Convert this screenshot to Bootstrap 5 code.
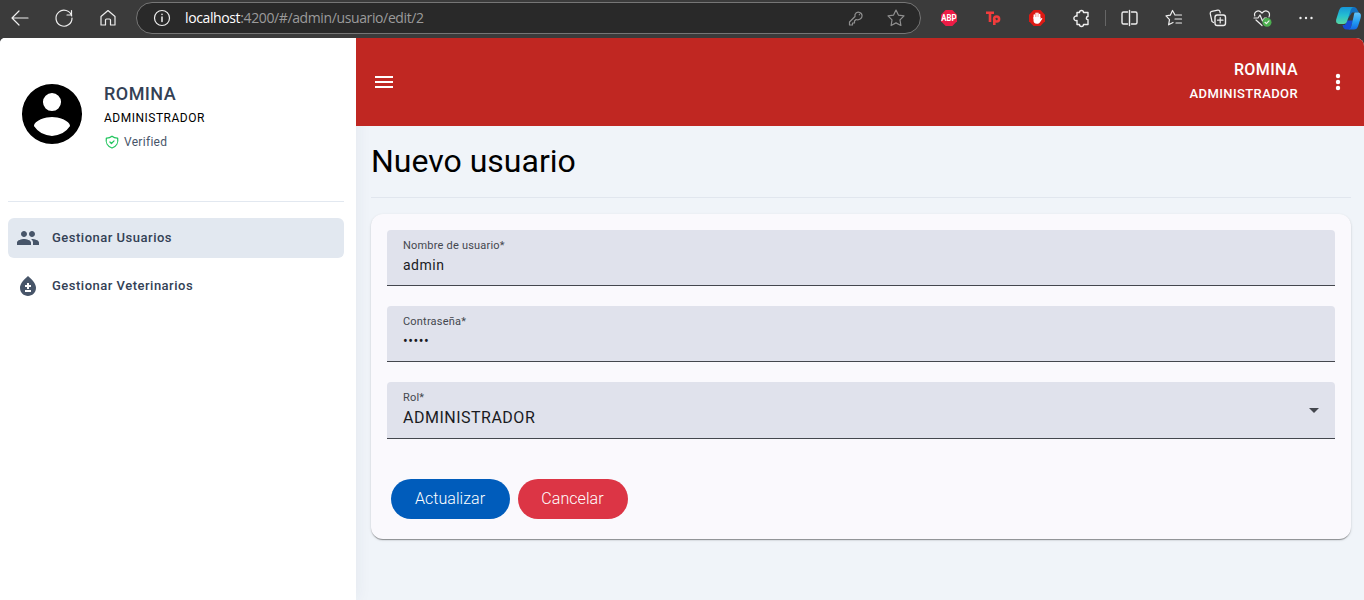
<!DOCTYPE html>
<html lang="es">
<head>
<meta charset="utf-8">
<meta name="viewport" content="width=device-width, initial-scale=1">
<title>Nuevo usuario</title>
<link rel="stylesheet" href="https://cdn.jsdelivr.net/npm/bootstrap@5.3.0/dist/css/bootstrap.min.css">
<style>
  body { font-family: Roboto, sans-serif; height: 600px; background: #3b3b3b; color: #000; }
  svg { display: block; flex: none; }
  .toolbar { height: 38px; padding-bottom: 2px; color: #eee; }
  .toolbar svg { fill: none; stroke: currentColor; stroke-width: 1.2; stroke-linecap: round; stroke-linejoin: round; }
  .slot { width: 44px; flex: none; display: flex; justify-content: center; }
  .slot-first { width: 40px; margin-right: 2px; }
  .address { width: 785px; height: 32px; margin: 0 6px; border: 1px solid #767676; background: #292929; padding: 0 12px 0 13px; font: 14px/20px "Open Sans", sans-serif; color: #9b9b9b; }
  .address b { font-weight: 400; color: #fff; }
  .url { margin-left: 11px; white-space: nowrap; letter-spacing: -.38px; }
  .dim { color: #8f8f8f; }
  .vline { width: 1px; height: 16px; margin: 0 2px; background: #666; }
  .app { height: 562px; border-radius: 5px 8px 0 0; background: #f0f4f9; }
  .side { width: 356px; flex: none; padding: 0 12px 0 8px; background: #fff; box-shadow: 0 0 16px rgba(40,60,90,.07); z-index: 1; }
  .profile { height: 164px; padding: 41px 0 0 9px; border-bottom: 1px solid #e2e8f0; }
  .who { margin: 3px 0 0 17px; }
  .who-name { font-size: 18px; line-height: 24px; font-weight: 500; letter-spacing: .45px; color: #334155; }
  .who-role { font-size: 12px; line-height: 24px; letter-spacing: .5px; }
  .who-ok { font-size: 12px; line-height: 24px; letter-spacing: .3px; color: #475569; gap: 5px; padding-left: 1px; }
  .menu-item { height: 40px; border-radius: 6px; padding: 0 8px; gap: 12px; font-size: 13px; font-weight: 500; letter-spacing: .5px; color: #334155; text-decoration: none; }
  .menu-item.active { background: #e2e8f0; }
  .menu-item svg { fill: #475569; }
  .topbar { height: 88px; background: #c02722; color: #fff; padding: 0 14px 0 16px; }
  .session { font-weight: 500; line-height: 24px; margin-right: 28px; }
  .session-name { font-size: 16px; letter-spacing: .4px; }
  .session-role { font-size: 13px; letter-spacing: .4px; }
  .main { padding: 0 13px 0 15px; }
  .title { font-size: 32px; line-height: 40px; font-weight: 400; padding: 15px 0 16px; height: 72px; margin: 0 0 16px; border-bottom: 1px solid #e1e6ee; }
  .panel { height: 325px; background: #faf9fd; border-radius: 12px; padding: 16px; box-shadow: 0 2px 1px -1px rgba(0,0,0,.25), 0 1px 1px rgba(0,0,0,.16), 0 1px 3px rgba(0,0,0,.12); }
  .field { height: 56px; margin-bottom: 20px; background: #e0e2ec; border-bottom: 1px solid #44474e; border-radius: 4px 4px 0 0; padding: 8px 16px 0; color: #1a1b1f; }
  .field-label { font-size: 11px; line-height: 16px; letter-spacing: .2px; color: #44474e; }
  .field-value { font-size: 14px; line-height: 22px; letter-spacing: .5px; }
  .field-choice { font-size: 16px; line-height: 24px; }
  .pill { height: 40px; border: 0; border-radius: 20px; padding: 0 1px 0 0; font-size: 16px; font-weight: 300; letter-spacing: .05px; color: #fff; }
  .pill-save { width: 119px; background: #005cbb; }
  .pill-cancel { width: 110px; background: #dc3545; }
</style>
</head>
<body class="overflow-hidden">
<header class="toolbar d-flex align-items-center">
  <div class="slot slot-first"><svg width="24" height="24" viewBox="0 0 24 24"><path d="M20 12H4.500M11 5l-7 7 7 7"/></svg></div>
  <div class="slot"><svg width="24" height="24" viewBox="0 0 24 24"><path d="M19.700 10A8 8 0 1 0 20 12M19.500 4.500V9H15"/></svg></div>
  <div class="slot"><svg width="24" height="24" viewBox="0 0 24 24"><path d="M5 10.500 12 4.500l7 6V19H14.500V14a1 1 0 0 0-1-1h-3a1 1 0 0 0-1 1v5H5z"/></svg></div>
  <div class="address rounded-pill d-flex align-items-center">
    <svg width="24" height="24" viewBox="0 0 24 24" style="color:#eee"><circle cx="12" cy="12" r="7.500"/><path d="M12 11v4.500M12 8.200v.2" stroke-width="1.500"/></svg>
    <span class="url"><b>localhost</b>:4200/#/admin/usuario/edit/2</span>
    <div class="dim d-flex ms-auto">
      <svg width="24" height="24" viewBox="0 0 24 24"><path d="M12 10.500 6.500 16v3h3v-2h2v-2l1.600-1.500c3 1 6-.8 6-3.700a3.700 3.700 0 0 0-7.100-1.300zM16.300 8.700h.2"/></svg>
      <svg width="24" height="24" viewBox="0 0 24 24" style="margin-left:17px"><path d="m12 4 2.400 5.100 5.600.8-4 4 .9 5.600L12 16.900l-4.900 2.600.9-5.600-4-4 5.600-.8z"/></svg>
    </div>
  </div>
  <div class="slot"><svg width="20" height="20" viewBox="0 0 20 20" style="stroke:none"><path fill="#ed1c46" d="M6.700 2h6.600L18 6.700v6.600L13.300 18H6.700L2 13.300V6.700z"/><text x="10" y="13.100" text-anchor="middle" font-family="Roboto" font-size="8.800" font-weight="700" textLength="15.400" lengthAdjust="spacingAndGlyphs" fill="#fff">ABP</text></svg></div>
  <div class="slot"><svg width="20" height="20" viewBox="0 0 20 20" style="stroke:#f23c3c;stroke-width:2.600;stroke-linecap:butt"><path d="M3 4.800h8M7 5v9M11.300 17V11"/><circle cx="13.600" cy="11" r="2.500"/></svg></div>
  <div class="slot"><svg width="20" height="20" viewBox="0 0 20 20" style="stroke:none"><path fill="#dc1a14" d="M6.700 2h6.600L18 6.700v6.600L13.300 18H6.700L2 13.300V6.700z"/><path fill="none" stroke="#fff" stroke-width="1.500" d="M7.300 10.500V7M9.100 10V5.300M10.900 10V5.300M12.600 10.500V6.500"/><path fill="#fff" d="M6.500 9h6.900v2.200l.9-1c.7-.4 1.200.1.900.7L13 14.300c-.7 1.200-1.800 1.500-3 1.500-2.600 0-3.500-1.300-3.500-3.500z"/></svg></div>
  <div class="slot"><svg width="24" height="24" viewBox="0 0 24 24"><path stroke-width="1.400" d="M8 6.500h2.500a2 2 0 0 1 4 0H19V10.500a1.600 1.600 0 0 0 0 3.300V18.500H14.500a2 2 0 0 1-4 0H8V14.500a2.300 2.300 0 1 1 0-4.300z"/></svg></div>
  <div class="vline"></div>
  <div class="slot"><svg width="24" height="24" viewBox="0 0 24 24" style="stroke-width:1.400"><path d="M9.500 6h-4A1.500 1.500 0 0 0 4 7.500v9A1.500 1.500 0 0 0 5.500 18h4M13.500 6h4A1.500 1.500 0 0 1 19 7.500v9a1.500 1.500 0 0 1-1.500 1.500h-4M11.500 4.500v15"/></svg></div>
  <div class="slot"><svg width="24" height="24" viewBox="0 0 24 24"><path d="m13 9-2.500-4.500-2.200 4.700-4.300.7 3.500 3.800-.9 5.100L11 16.500M14 9h5.500M13 13h6.500M14 17h5.500"/></svg></div>
  <div class="slot"><svg width="24" height="24" viewBox="0 0 24 24"><path d="M7.500 16.500 6 15.500 4.200 7.500a2 2 0 0 1 1.600-2.200l6-1.100A2 2 0 0 1 14 5.800l.2 1"/><rect x="9" y="9" width="10.500" height="10.500" rx="2.200" stroke-width="1.400"/><path d="M14.200 11.500v5.500M11.500 14.200H17"/></svg></div>
  <div class="slot"><svg width="24" height="24" viewBox="0 0 24 24"><path d="M4.800 10C3.500 6 8 2.800 12 7c4-4.200 9-1 7 4M4 12h4l2-3 2.500 6 2-3h2M6 14l6 5.500"/><circle cx="17" cy="16.200" r="4.500" fill="#4caf50" stroke="none"/><path d="m15 16.300 1.400 1.300 2.600-2.700"/></svg></div>
  <div class="slot"><svg width="24" height="24" viewBox="0 0 24 24" style="fill:currentColor;stroke:none"><circle cx="6.500" cy="12" r="1.200"/><circle cx="12" cy="12" r="1.200"/><circle cx="17.500" cy="12" r="1.200"/></svg></div>
  <svg width="32" height="28" viewBox="-2 0 32 28" style="stroke:none;margin-left:3px">
    <defs>
      <linearGradient id="ga" x1="0" y1="0" x2="0" y2="1"><stop stop-color="#1695d8"/><stop offset=".5" stop-color="#25bfd0"/><stop offset="1" stop-color="#58d6a0"/></linearGradient>
      <linearGradient id="gb" x1="0" y1="0" x2="0" y2="1"><stop stop-color="#63c4fb"/><stop offset=".55" stop-color="#229df2"/><stop offset="1" stop-color="#1368e6"/></linearGradient>
    </defs>
    <path fill="#174cd4" d="M14 16.500h6l-3 9h-3c-3 0-4-2-4.500-4.500H12z"/>
    <path fill="#116fc0" d="M17 3h4c3 0 3.500 4 5 5.500h-7l-4 6z"/>
    <path fill="url(#ga)" d="M10 3h11c-3 0-3.500 4-4.500 7l-2 6c-1 3-2 4-4 4H7c-4 0-4.500-2.500-3.500-5.500l2.500-8C7 4 8 3 10 3z"/>
    <path fill="url(#gb)" d="M22 8.500h2.500c3.500 0 4 2.500 3 6l-2.400 7.500c-.8 2.500-2 3.500-4.100 3.500h-6c2 0 3-2 3.600-4.500l2-8.500c.4-2 .7-4 1.400-4z"/>
  </svg>
</header>

<div class="app d-flex overflow-hidden">
  <aside class="side">
    <div class="profile d-flex align-items-start">
      <svg width="70" height="70" viewBox="0 0 24 24"><path d="M12 1.700a10.300 10.300 0 1 0 0 20.600 10.300 10.300 0 0 0 0-20.600zm0 3.100a3.100 3.100 0 1 1 0 6.200 3.100 3.100 0 0 1 0-6.200zm0 14.700a7.600 7.600 0 0 1-6.200-3.350c.05-2.050 4.150-3.150 6.200-3.150s6.150 1.100 6.200 3.150A7.600 7.600 0 0 1 12 19.500z"/></svg>
      <div class="who">
        <div class="who-name">ROMINA</div>
        <div class="who-role">ADMINISTRADOR</div>
        <div class="who-ok d-flex align-items-center">
          <svg width="14" height="14" viewBox="0 0 24 24" fill="none" stroke="#22c55e" stroke-width="2.200" stroke-linecap="round" stroke-linejoin="round"><path d="m8.500 12 2.500 2.500 4.500-4.500M12 2c-3 2.500-6 3.500-9.700 3.300C.8 13 4.500 20 12 22.300c7.500-2.300 11.200-9.300 9.700-17C18 5.500 15 4.500 12 2z"/></svg>
          <span>Verified</span>
        </div>
      </div>
    </div>
    <nav class="d-flex flex-column gap-2 pt-3">
      <a class="menu-item active d-flex align-items-center" href="#"><svg width="24" height="24" viewBox="0 0 24 24"><path d="M16 11c1.660 0 2.990-1.340 2.990-3S17.660 5 16 5s-3 1.340-3 3 1.340 3 3 3zm-8 0c1.660 0 2.990-1.340 2.990-3S9.660 5 8 5 5 6.340 5 8s1.340 3 3 3zm0 2c-2.330 0-7 1.170-7 3.500V19h14v-2.500C15 14.170 10.330 13 8 13zm8 0c-.29 0-.62.020-.97.050 1.160.840 1.970 1.970 1.970 3.450V19h6v-2.500c0-2.330-4.670-3.500-7-3.500z"/></svg>Gestionar Usuarios</a>
      <a class="menu-item d-flex align-items-center" href="#"><svg width="24" height="24" viewBox="0 0 24 24"><path fill-rule="evenodd" d="M12 2c-5.330 4.550-8 8.480-8 11.800 0 4.980 3.800 8.200 8 8.200s8-3.220 8-8.200C20 10.480 17.330 6.550 12 2zm3 16H9v-2h6v2zm0-5h-2v2h-2v-2H9v-2h2V9h2v2h2v2z"/></svg>Gestionar Veterinarios</a>
    </nav>
  </aside>

  <div class="flex-grow-1">
    <div class="topbar d-flex align-items-center justify-content-between position-relative z-2">
      <svg width="24" height="24" viewBox="0 0 24 24" fill="#fff"><path d="M3 18h18v-2H3v2zm0-5h18v-2H3v2zm0-7v2h18V6H3z"/></svg>
      <div class="d-flex align-items-center">
        <div class="session text-end">
          <div class="session-name">ROMINA</div>
          <div class="session-role">ADMINISTRADOR</div>
        </div>
        <svg width="24" height="24" viewBox="0 0 24 24" fill="#fff"><circle cx="12" cy="6" r="2.200"/><circle cx="12" cy="12" r="2.200"/><circle cx="12" cy="18" r="2.200"/></svg>
      </div>
    </div>
    <main class="main">
      <h1 class="title">Nuevo usuario</h1>
      <form class="panel">
        <div class="field">
          <div class="field-label">Nombre de usuario*</div>
          <div class="field-value">admin</div>
        </div>
        <div class="field">
          <div class="field-label">Contraseña*</div>
          <div class="field-value">•••••</div>
        </div>
        <div class="field position-relative" style="height:57px">
          <div class="field-label">Rol*</div>
          <div class="field-value field-choice">ADMINISTRADOR</div>
          <svg class="position-absolute" style="right:16px;top:26px" width="10" height="5" viewBox="0 0 10 5" fill="#44474e"><path d="M0 0h10L5 5z"/></svg>
        </div>
        <div class="d-flex gap-2 ps-1 pt-3" style="margin-top:24px">
          <button type="button" class="pill pill-save">Actualizar</button>
          <button type="button" class="pill pill-cancel">Cancelar</button>
        </div>
      </form>
    </main>
  </div>
</div>
<script src="https://cdn.jsdelivr.net/npm/bootstrap@5.3.0/dist/js/bootstrap.bundle.min.js"></script>
</body>
</html>
